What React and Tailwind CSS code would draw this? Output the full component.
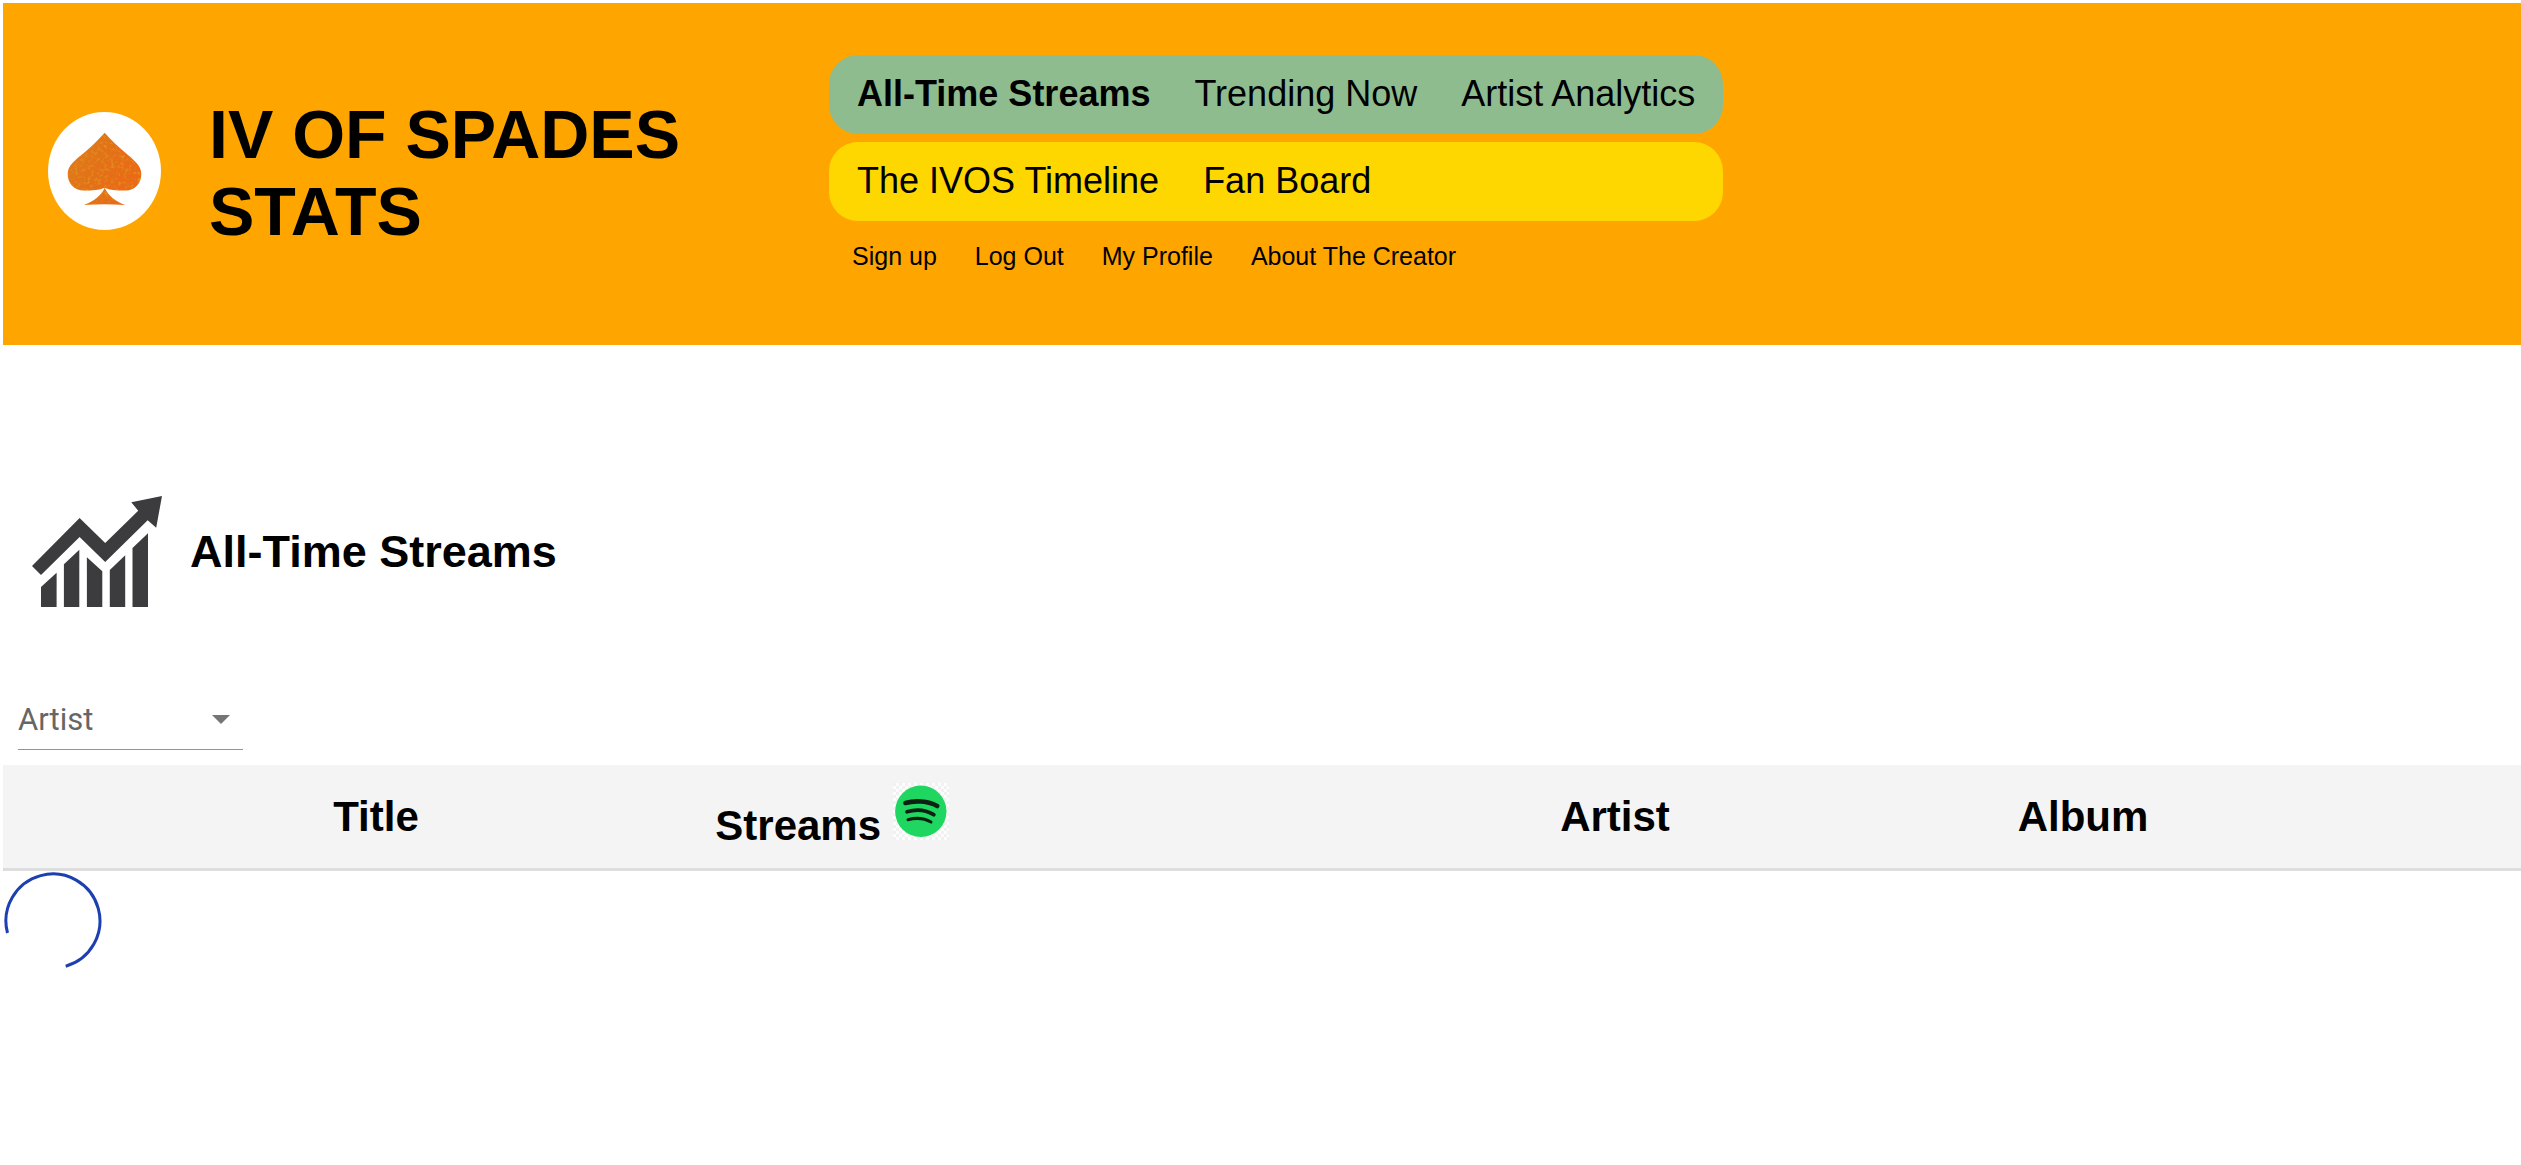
const mainLinks = ["All-Time Streams", "Trending Now", "Artist Analytics"];
const fanLinks = ["The IVOS Timeline", "Fan Board"];
const accountLinks = ["Sign up", "Log Out", "My Profile", "About The Creator"];

function SpadeLogo() {
  return (
    <svg viewBox="0 0 113 118" className="h-[118px] w-[113px] shrink-0" role="img" aria-label="IV of Spades logo">
      <defs>
        <linearGradient id="spade-fill" x1="0" y1="0" x2="1" y2="0.5">
          <stop offset="0" stopColor="#df7f1c" />
          <stop offset="0.5" stopColor="#e27219" />
          <stop offset="1" stopColor="#ea6a16" />
        </linearGradient>
        <filter id="spade-grain" x="0" y="0" width="1" height="1" colorInterpolationFilters="sRGB">
          <feTurbulence type="fractalNoise" baseFrequency="0.3" numOctaves="3" seed="7" result="noise" />
          <feColorMatrix
            in="noise"
            type="matrix"
            values="0 0 0 0 0.88  0 0 0 0 0.62  0 0 0 0 0.12  2.2 0 0 0 -1.1"
            result="specks"
          />
          <feComposite in="specks" in2="SourceAlpha" operator="in" result="clipped" />
          <feMerge>
            <feMergeNode in="SourceGraphic" />
            <feMergeNode in="clipped" />
          </feMerge>
        </filter>
      </defs>
      <ellipse cx="56.5" cy="59" rx="56.5" ry="59" fill="#fff" />
      <g fill="url(#spade-fill)" filter="url(#spade-grain)">
        <path d="M56.7 20.7C50 28 44 34 37 40C28 47.5 19.7 53 19.7 62C19.7 71 26 78.5 36 78.5C45 78.5 51 78 56.7 75.7C62 78 68 78.5 77.5 78.5C87 78.5 93.3 71 93.3 62C93.3 53 85 47.5 76.5 40C69.5 34 63 28 56.7 20.7Z" />
        <path d="M56.7 75.7C53 84 46 89 36 93C50 92 63 92 77 93C67 89 60.5 84 56.7 75.7Z" />
      </g>
    </svg>
  );
}

function ChartIcon() {
  return (
    <svg viewBox="0 0 130 112" className="h-[112px] w-[130px] shrink-0" fill="#3c3c3e" aria-hidden="true">
      <path d="M0 70L47.6 22L73.2 47L106.2 14.7L99.3 6.3L130 0L124.2 31.7L115.7 24.3L73.2 66L47.6 41L9 79Z" />
      <path d="M9 91L24.6 76.7V111H9Z" />
      <path d="M31.9 68.3L47.3 53.7V111H31.9Z" />
      <path d="M54.9 61.3L70.3 75.3V111H54.9Z" />
      <path d="M77.8 74L93.2 59.3V111H77.8Z" />
      <path d="M100.5 52L116 37.3V111H100.5Z" />
    </svg>
  );
}

function SpotifyIcon() {
  return (
    <svg viewBox="0 0 56 57" className="inline-block h-[57px] w-[56px] align-baseline" role="img" aria-label="Spotify">
      <defs>
        <pattern id="checker" width="6" height="6" patternUnits="userSpaceOnUse">
          <rect width="6" height="6" fill="#fdfdfd" />
          <rect width="3" height="3" fill="#f1f1f1" />
          <rect x="3" y="3" width="3" height="3" fill="#f1f1f1" />
        </pattern>
      </defs>
      <rect width="56" height="57" fill="url(#checker)" />
      <circle cx="27.8" cy="28.3" r="25.7" fill="#1fd760" />
      <g fill="none" stroke="#0d2112" strokeLinecap="round">
        <path d="M12.5 20C22 17.2 35 18 44.2 23" strokeWidth="4.6" />
        <path d="M14 28.8C23 26 33 27 40.800 31.7" strokeWidth="3.8" />
        <path d="M15 36.7C23 34.6 31 35 38 39" strokeWidth="3.1" />
      </g>
    </svg>
  );
}

function Spinner() {
  return (
    <svg viewBox="0 0 100 100" className="block h-[100px] w-[100px]" role="img" aria-label="Loading">
      <path d="M4.5 62A47 47 0 1 1 62.7 95.2" fill="none" stroke="#1d3fb0" strokeWidth="3" />
    </svg>
  );
}

function PillNav({ links, label, className }) {
  return (
    <nav aria-label={label} className={className}>
      {links.map((text) => (
        <a key={text} href="#" className={text === "All-Time Streams" ? "font-bold" : ""}>
          {text}
        </a>
      ))}
    </nav>
  );
}

export default function App() {
  return (
    <div className="overflow-x-hidden bg-white pt-[3px] pl-[3px] font-['Liberation_Sans',Arial,sans-serif] text-black">
      <header className="flex items-center bg-[#ffa500] py-[52px] pl-[45px]">
        <div className="pb-[7px]">
          <SpadeLogo />
        </div>
        <h1 className="ml-12 w-[620px] pr-24 pb-[3px] text-[68px] leading-[77px] font-bold">IV OF SPADES STATS</h1>
        <div className="flex flex-col gap-2 whitespace-nowrap">
          <PillNav
            links={mainLinks}
            label="Statistics"
            className="flex gap-11 rounded-[29px] bg-[#8fbc8f] px-7 pt-[18px] pb-5 text-[36px] leading-[41px]"
          />
          <PillNav
            links={fanLinks}
            label="Community"
            className="flex gap-11 rounded-[29px] bg-[#ffd700] px-7 pt-[18px] pb-5 text-[36px] leading-[41px]"
          />
          <PillNav
            links={accountLinks}
            label="Account"
            className="flex gap-[38px] px-[23px] pt-[13px] pb-[22px] text-[25px] leading-[29px]"
          />
        </div>
      </header>

      <main>
        <div className="mt-[151px] flex items-center gap-7 pl-[29px]">
          <ChartIcon />
          <h2 className="text-[45px] leading-[52px] font-bold">All-Time Streams</h2>
        </div>

        <div className="relative mt-[94px] ml-[15px] w-[225px]">
          <select
            aria-label="Artist"
            className="block w-full appearance-none rounded-none border-b border-[#949494] bg-transparent pb-[11px] font-[Roboto,sans-serif] text-[31px] leading-[36px] text-[#666] outline-none"
          >
            <option>Artist</option>
          </select>
          <svg viewBox="0 0 18 9" className="pointer-events-none absolute top-[13px] right-[13px] h-[9px] w-[18px]" fill="#757575" aria-hidden="true">
            <path d="M0 0H18L9 9Z" />
          </svg>
        </div>

        <table className="mt-[15px] w-full table-fixed border-collapse text-center text-[42px] leading-[48px]">
          <colgroup>
            <col className="w-[200px]" />
            <col className="w-[346px]" />
            <col className="w-[566px]" />
            <col className="w-[200px]" />
            <col className="w-[600px]" />
            <col className="w-[336px]" />
            <col className="w-[270px]" />
          </colgroup>
          <thead>
            <tr className="border-b-3 border-[#ddd] bg-[#f4f4f4]">
              <td />
              <th scope="col">Title</th>
              <th scope="col" className="py-[18px] whitespace-nowrap">
                Streams <SpotifyIcon />
              </th>
              <td />
              <th scope="col">Artist</th>
              <th scope="col">Album</th>
              <td />
            </tr>
          </thead>
        </table>
        <Spinner />
      </main>
    </div>
  );
}
